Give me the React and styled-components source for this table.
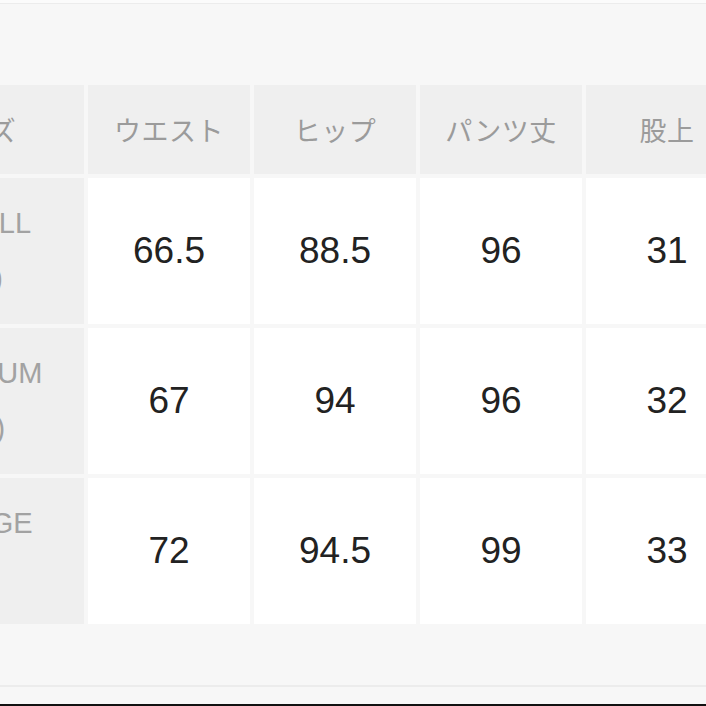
import React from 'react';
import styled, { createGlobalStyle } from 'styled-components';

const GlobalStyle = createGlobalStyle`
  html, body {
    margin: 0;
    padding: 0;
    background: #f7f7f7;
    overflow: hidden;
  }
`;

const Page = styled.div`
  width: 706px;
  height: 706px;
  background: #f7f7f7;
  overflow: hidden;
  display: flex;
  flex-direction: column;
  font-family: "Liberation Sans", "Noto Sans CJK JP", sans-serif;
`;

const TopStrip = styled.div`
  height: 3px;
  background: #fbfbfb;
  border-bottom: 1px solid #ececec;
  flex-shrink: 0;
`;

const Table = styled.div`
  display: grid;
  grid-template-columns: 201px repeat(4, 162px);
  grid-template-rows: 89px repeat(3, 146px);
  gap: 4px;
  margin-top: 81px;
  margin-left: -117px;
  width: max-content;
  flex-shrink: 0;
`;

const HeadCell = styled.div`
  background: #efefef;
  display: flex;
  align-items: center;
  justify-content: center;
  padding-right: ${(p) => (p.$lead ? '16px' : '0')};
  color: #9b9b9b;
  font-family: "Noto Sans CJK JP", "Liberation Sans", sans-serif;
  font-size: 27px;
  letter-spacing: 0.5px;
`;

const LabelCell = styled.div`
  background: #efefef;
  display: flex;
  flex-direction: column;
  align-items: center;
  justify-content: center;
  color: #a2a2a2;
  font-size: 29px;
  line-height: 55px;
  text-align: center;
`;

const ValueCell = styled.div`
  background: #ffffff;
  display: flex;
  align-items: center;
  justify-content: center;
  color: #222222;
  font-size: 37px;
`;

const Footer = styled.div`
  margin-top: 61px;
  height: 17px;
  border-top: 2px solid #ececec;
  border-bottom: 2px solid #111;
  background: #f7f7f7;
  flex-shrink: 0;
`;

const headers = ['サイズ', 'ウエスト', 'ヒップ', 'パンツ丈', '股上'];

const rows = [
  { name: 'SMALL', code: '(S)', values: ['66.5', '88.5', '96', '31'] },
  { name: 'MEDIUM', code: '(M)', values: ['67', '94', '96', '32'] },
  { name: 'LARGE', code: '(L)', values: ['72', '94.5', '99', '33'] },
];

function App() {
  return (
    <Page>
      <GlobalStyle />
      <TopStrip />
      <Table>
        {headers.map((h, i) => (
          <HeadCell key={h} $lead={i === 0}>{h}</HeadCell>
        ))}
        {rows.map((row) => (
          <React.Fragment key={row.name}>
            <LabelCell>
              <span>{row.name}</span>
              <span>{row.code}</span>
            </LabelCell>
            {row.values.map((v, i) => (
              <ValueCell key={i}>{v}</ValueCell>
            ))}
          </React.Fragment>
        ))}
      </Table>
      <Footer />
    </Page>
  );
}

export default App;
